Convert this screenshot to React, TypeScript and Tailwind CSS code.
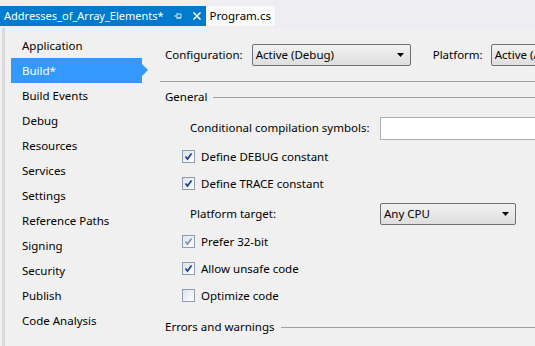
import React from "react";

const navItems = [
  "Application",
  "Build*",
  "Build Events",
  "Debug",
  "Resources",
  "Services",
  "Settings",
  "Reference Paths",
  "Signing",
  "Security",
  "Publish",
  "Code Analysis",
];

function Check({ state }: { state: "checked" | "dim" | "off" }) {
  return (
    <span className="w-[13px] h-[13px] border border-[#8e9bb0] bg-gradient-to-br from-[#dde3ea] to-[#ffffff] flex items-center justify-center">
      {state !== "off" && (
        <svg width="9" height="9" viewBox="0 0 9 9">
          <path
            d="M1.5 4.5 L3.5 7 L7.5 1.5"
            fill="none"
            stroke={state === "checked" ? "#21409a" : "#5a6b94"}
            strokeWidth="1.8"
            opacity={state === "dim" ? 0.7 : 1}
          />
        </svg>
      )}
    </span>
  );
}

function Select({ label, width }: { label: string; width: string }) {
  return (
    <div
      className={`${width} h-[22px] border border-[#707070] rounded-[2px] bg-gradient-to-b from-[#f2f2f2] to-[#dedede] flex items-center justify-between pl-[3px] pr-[6px]`}
    >
      <span>{label}</span>
      <svg width="7" height="4" viewBox="0 0 7 4">
        <path d="M0 0 L7 0 L3.5 4 Z" fill="#000" />
      </svg>
    </div>
  );
}

function CheckRow({ state, label }: { state: "checked" | "dim" | "off"; label: string }) {
  return (
    <div className="h-[27px] flex items-center gap-[6px] pl-[22px]">
      <Check state={state} />
      <span>{label}</span>
    </div>
  );
}

export default function App() {
  return (
    <div
      className="w-[535px] h-[346px] overflow-hidden bg-[#f0f0f0] text-[11.5px] text-black flex flex-col"
      style={{ fontFamily: '"Segoe UI", "Noto Sans", "Open Sans", sans-serif' }}
    >
      {/* tab strip */}
      <div className="h-[28px] bg-[#eeeef2] flex items-end shrink-0">
        <div className="h-[20px] mb-[2px] bg-[#007acc] text-white flex items-center pl-[4px] pr-[4px] gap-[9px]">
          <span className="text-[11px]">Addresses_of_Array_Elements*</span>
          <svg width="10" height="10" viewBox="0 0 10 10">
            <path d="M1 5 H4 M4 2 V8 M4 3 H8 V7 H4 M5 7 H8" fill="none" stroke="#cfe6f6" strokeWidth="1" />
          </svg>
          <svg width="10" height="10" viewBox="0 0 10 10">
            <path d="M1.5 1.5 L8.5 8.5 M8.5 1.5 L1.5 8.5" stroke="#fff" strokeWidth="1.6" />
          </svg>
        </div>
        <div className="h-[20px] mb-[2px] bg-[#fafafa] flex items-center px-[4px]">
          <span>Program.cs</span>
        </div>
      </div>

      <div className="flex-1 flex border-l-[3px] border-[#d9d9d9] ml-[2px]">
        {/* side nav */}
        <div className="w-[155px] shrink-0 pt-[5px] pl-[6px]">
          {navItems.map((item, i) =>
            i === 1 ? (
              <div key={item} className="relative h-[25px] w-[131px] bg-[#3399ff] text-white flex items-center pl-[11px]">
                <span>{item}</span>
                <span className="absolute right-[-6px] top-[6px] w-0 h-0 border-y-[6px] border-y-transparent border-l-[6px] border-l-[#3399ff]" />
              </div>
            ) : (
              <div key={item} className="h-[25px] flex items-center pl-[11px]">
                <span>{item}</span>
              </div>
            )
          )}
        </div>

        {/* main */}
        <div className="flex-1 min-w-0 flex flex-col">
          <div className="h-[54px] flex items-center border-b border-[#a0a0a0] pl-[5px] pt-[1px] whitespace-nowrap">
            <span className="mr-[9px]">Configuration:</span>
            <Select label="Active (Debug)" width="w-[159px] shrink-0" />
            <span className="ml-[22px] mr-[8px]">Platform:</span>
            <Select label="Active (Any CPU)" width="w-[120px] shrink-0" />
          </div>

          <div className="h-[29px] flex items-center pl-[5px] gap-[6px] pt-[1px]">
            <span>General</span>
            <div className="flex-1 h-px bg-[#a0a0a0]" />
          </div>

          <div className="h-[32px] flex items-center pl-[30px] pt-[2px]">
            <span className="w-[190px] shrink-0">Conditional compilation symbols:</span>
            <div className="flex-1 h-[23px] bg-white border border-[#abadb3] border-r-0" />
          </div>

          <CheckRow state="checked" label="Define DEBUG constant" />
          <CheckRow state="checked" label="Define TRACE constant" />

          <div className="h-[31px] flex items-center pl-[30px] pt-[2px]">
            <span className="w-[190px] shrink-0">Platform target:</span>
            <Select label="Any CPU" width="w-[136px] shrink-0" />
          </div>

          <CheckRow state="dim" label="Prefer 32-bit" />
          <CheckRow state="checked" label="Allow unsafe code" />
          <CheckRow state="off" label="Optimize code" />

          <div className="h-[36px] flex items-center pl-[5px] gap-[6px]">
            <span>Errors and warnings</span>
            <div className="flex-1 h-px bg-[#a0a0a0]" />
          </div>
        </div>
      </div>
    </div>
  );
}
